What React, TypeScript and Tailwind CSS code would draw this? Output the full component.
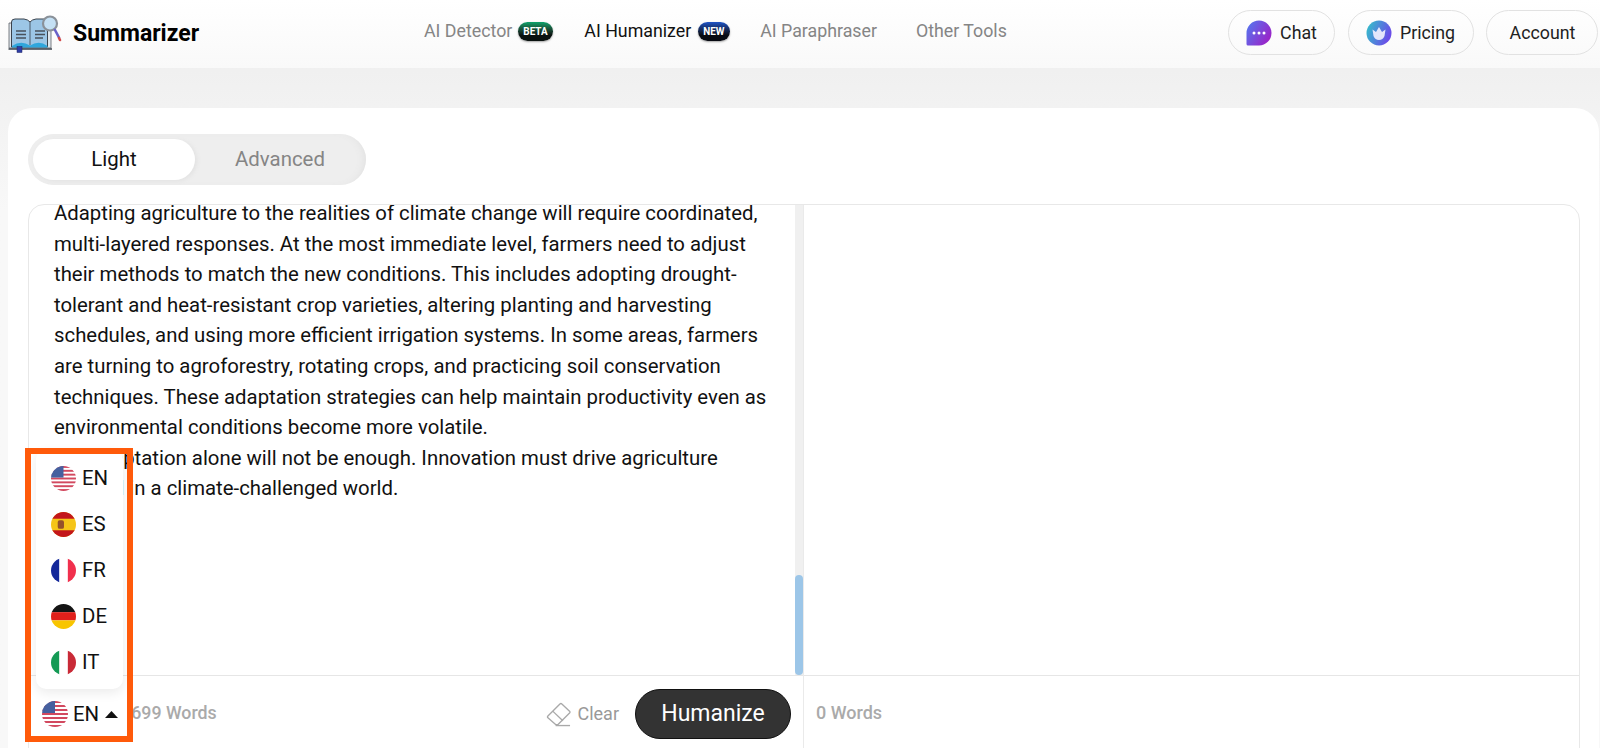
import React from "react";

const Flag = ({ code, size }: { code: string; size: number }) => {
  const id = "c" + code + size;
  return (
    <svg width={size} height={size} viewBox="0 0 26 26" className="shrink-0">
      <clipPath id={id}><circle cx="13" cy="13" r="13" /></clipPath>
      <g clipPath={`url(#${id})`}>
        {code === "EN" && (
          <>
            <rect width="26" height="26" fill="#fff" />
            {[0, 4, 8, 12, 16, 20, 24].map((y) => (
              <rect key={y} y={y} width="26" height="2" fill="#d2495f" />
            ))}
            <rect width="13" height="12" fill="#46609f" />
          </>
        )}
        {code === "ES" && (
          <>
            <rect width="26" height="26" fill="#f5c518" />
            <rect width="26" height="7" fill="#c3161c" />
            <rect y="19" width="26" height="7" fill="#c3161c" />
            <rect x="7" y="8.5" width="6.5" height="9" rx="2" fill="#94512b" />
          </>
        )}
        {code === "FR" && (
          <>
            <rect width="26" height="26" fill="#fff" />
            <rect width="8.5" height="26" fill="#14289a" />
            <rect x="17.5" width="8.5" height="26" fill="#f1304d" />
          </>
        )}
        {code === "DE" && (
          <>
            <rect width="26" height="8.5" fill="#141414" />
            <rect y="8.5" width="26" height="8.5" fill="#e0201b" />
            <rect y="17" width="26" height="9" fill="#f8c500" />
          </>
        )}
        {code === "IT" && (
          <>
            <rect width="26" height="26" fill="#fff" />
            <rect width="8.5" height="26" fill="#149a55" />
            <rect x="17.5" width="8.5" height="26" fill="#c92a37" />
          </>
        )}
      </g>
    </svg>
  );
};

const BookLogo = () => (
  <svg width="54" height="40" viewBox="8 13 54 40" className="shrink-0">
    <path d="M9 22 L9 47 L51 47 L51 22 Z" fill="#dfe6ec" stroke="#5a6068" strokeWidth="0.8" />
    <path d="M11.5 46 L11.5 21 Q11.5 18 15 18 L24 18 Q28 18.5 30 21 Q32 18.5 36 18 L45 18 Q47.5 18 47.5 21 L47.5 46 Z" fill="#9cc6e6" stroke="#3a424c" strokeWidth="1" />
    <path d="M30 21 L30 44" stroke="#3a424c" strokeWidth="0.8" />
    <path d="M12 45 Q21 39 30 44.5 Q39 39 47.5 45 L47.5 46.5 L12 46.5 Z" fill="#2fa6dc" />
    <path d="M8.5 48 L52 48" stroke="#3a424c" strokeWidth="1.6" />
    <rect x="17" y="45.5" width="5" height="6" fill="#2e3da6" stroke="#1c2560" strokeWidth="0.5" />
    <path d="M16 30h10M16 33.5h10M16 37h10M35 30h10M35 33.5h10M35 37h8" stroke="#48525c" strokeWidth="1.5" />
    <circle cx="50" cy="22.5" r="7" fill="#c4e0f4" stroke="#8a9199" strokeWidth="2.2" />
    <path d="M55 29 L59 36.5" stroke="#6a62c8" strokeWidth="2.6" strokeLinecap="round" />
    <path d="M59 37 L60 39" stroke="#d24a4a" strokeWidth="2.6" strokeLinecap="round" />
  </svg>
);

const ChatIcon = () => (
  <svg width="26" height="26" viewBox="0 0 26 26" className="shrink-0">
    <defs>
      <linearGradient id="chatg" x1="0" y1="0" x2="1" y2="0.6">
        <stop offset="0" stopColor="#4f7cf2" />
        <stop offset="1" stopColor="#9a24c8" />
      </linearGradient>
    </defs>
    <path d="M13 0.5a12.5 12.5 0 1 1 0 25H2a1.5 1.5 0 0 1-1.5-1.5V13A12.5 12.5 0 0 1 13 0.5Z" fill="url(#chatg)" />
    <circle cx="8" cy="13" r="1.5" fill="#fff" />
    <circle cx="13" cy="13" r="1.5" fill="#fff" />
    <circle cx="18" cy="13" r="1.5" fill="#fff" />
  </svg>
);

const PricingIcon = () => (
  <svg width="26" height="26" viewBox="0 0 26 26" className="shrink-0">
    <defs>
      <linearGradient id="pricg" x1="0" y1="0" x2="1" y2="0.4">
        <stop offset="0" stopColor="#2fc8c8" />
        <stop offset="1" stopColor="#6a4ee8" />
      </linearGradient>
    </defs>
    <circle cx="13" cy="13" r="12.5" fill="url(#pricg)" />
    <path d="M6.5 9.5 L10 12 L13 7 L16 12 L19.5 9.5 L18.5 16 Q17 20 13 20 Q9 20 7.5 16 Z" fill="#e4e6fb" />
  </svg>
);

const Eraser = () => (
  <svg width="25" height="25" viewBox="0 0 26 26" fill="none" stroke="#a9a9a9" strokeWidth="1.4" strokeLinejoin="round" className="shrink-0">
    <path d="M2 14.5 L14.5 2 a1.5 1.5 0 0 1 2 0 L24.5 9.5 a1.5 1.5 0 0 1 0 2 L12.5 23.5 L10 23.5 L2 16.5 a1.5 1.5 0 0 1 0-2 Z" />
    <path d="M7 9.5 L17.5 19.5" />
    <path d="M10 24.5 H25" />
  </svg>
);

const Badge = ({ label, cls }: { label: string; cls: string }) => (
  <span className={`flex h-[19px] items-center justify-center rounded-full text-[11px] font-bold leading-none text-white shadow-[0_1px_2px_rgba(0,0,0,0.35)] ${cls}`}>
    <span className="scale-x-90">{label}</span>
  </span>
);

const lines = [
  "Adapting agriculture to the realities of climate change will require coordinated,",
  "multi-layered responses. At the most immediate level, farmers need to adjust",
  "their methods to match the new conditions. This includes adopting drought-",
  "tolerant and heat-resistant crop varieties, altering planting and harvesting",
  "schedules, and using more efficient irrigation systems. In some areas, farmers",
  "are turning to agroforestry, rotating crops, and practicing soil conservation",
  "techniques. These adaptation strategies can help maintain productivity even as",
  "environmental conditions become more volatile.",
  "But adaptation alone will not be enough. Innovation must drive agriculture",
  "forward in a climate-challenged world.",
];

export default function App() {
  return (
    <div className="relative flex h-[748px] w-[1600px] flex-col overflow-hidden bg-gradient-to-b from-[#ececec] to-[#f8f8f8] to-[28%] font-['Roboto',sans-serif]">
      <header className="flex h-[68px] shrink-0 items-center bg-gradient-to-b from-white to-[#f9f9f9] pr-[2px]">
        <div className="flex w-[400px] items-center pl-[8px]">
          <BookLogo />
          <span className="ml-[11px] text-[23px] font-bold text-black">Summarizer</span>
        </div>
        <nav className="mb-[5px] ml-[24px] flex flex-1 items-center text-[17.8px] text-[#858585]">
          <span>AI Detector</span>
          <span className="ml-[6px] w-[35px]"><Badge label="BETA" cls="bg-gradient-to-b from-[#0aa46c] to-[#0a1210] to-[70%]" /></span>
          <span className="ml-[31px] text-[#111]">AI Humanizer</span>
          <span className="ml-[7px] w-[32px]"><Badge label="NEW" cls="bg-gradient-to-b from-[#1f55c8] to-[#080a12] to-[70%]" /></span>
          <span className="ml-[30px]">AI Paraphraser</span>
          <span className="ml-[39px]">Other Tools</span>
        </nav>
        <div className="mb-[3px] flex items-center gap-[12.5px] text-[17.8px] text-[#222]">
          <button className="flex h-[45px] w-[107px] items-center justify-center gap-[8px] rounded-full border border-[#e2e2e2]"><ChatIcon /><span className="pt-[2px]">Chat</span></button>
          <button className="flex h-[45px] w-[126px] items-center justify-center gap-[8px] rounded-full border border-[#e2e2e2]"><PricingIcon /><span className="pt-[2px]">Pricing</span></button>
          <button className="flex h-[45px] w-[112px] items-center justify-center rounded-full border border-[#e2e2e2]"><span className="pl-[1px] pt-[2px]">Account</span></button>
        </div>
      </header>

      <main className="ml-[8px] mr-[1px] mt-[40px] flex-1 rounded-t-[24px] bg-white pl-[20px] pr-[19px] pt-[26px]">
        <div className="flex h-[51px] w-[338px] items-center rounded-full bg-[#eeeeee] p-[5px] shadow-[inset_-6px_0_10px_-6px_#ddd]">
          <div className="flex h-full w-[162px] items-center justify-center rounded-full bg-white text-[20.4px] text-[#111] shadow-[2px_1px_4px_#e2e2e2]">Light</div>
          <div className="flex flex-1 items-center justify-center pl-[4px] text-[20.4px] text-[#858585]">Advanced</div>
        </div>

        <div className="mt-[19px] flex h-[600px] rounded-[16px] border border-[#e8e8e8]">
          <div className="relative flex w-[775px] shrink-0 flex-col border-r border-[#eaeaea]">
            <div className="relative h-[470px] overflow-hidden rounded-tl-[16px]">
              <div className="-mt-[7px] whitespace-nowrap pl-[25px] text-[20.35px] leading-[30.6px] text-[#111]">
                {lines.map((l) => <div key={l}>{l}</div>)}
              </div>
              <div className="absolute bottom-0 right-0 top-0 w-[8px] bg-[#f0f0f0]">
                <div className="absolute bottom-0 h-[100px] w-full rounded-full bg-[#9cc6e8]" />
              </div>
            </div>
            <div className="flex flex-1 items-start border-t border-[#e6e6e6] pl-[13px] pr-[12px] pt-[13px]">
              <div className="flex h-[50px] w-full items-center">
                <div className="relative z-10 -mr-[10px] flex h-full items-center bg-white pr-[10px] text-[20.4px] text-[#111]">
                  <Flag code="EN" size={26} />
                  <span className="ml-[5px]">EN</span>
                  <svg width="13" height="7" viewBox="0 0 13 7" className="ml-[6px]"><path d="M6.5 0 L13 7 H0 Z" fill="#111" /></svg>
                </div>
                <span className="mb-[2px] ml-[3px] text-[17.8px] font-medium text-[#aaaaaa]">1699 Words</span>
                <div className="ml-auto flex items-center">
                  <Eraser />
                  <span className="mb-[2px] ml-[6px] text-[18px] text-[#999]">Clear</span>
                  <button className="ml-[16px] flex h-[50px] w-[156px] items-center justify-center rounded-full border border-[#111] bg-[#333333] text-[23px] text-white">Humanize</button>
                </div>
              </div>
            </div>
            <div className="absolute left-[7px] top-[244px] z-10 w-[87px] rounded-[10px] bg-white pb-[4px] pt-[6px] shadow-[0_4px_12px_rgba(0,0,0,0.08)]">
              {["EN", "ES", "FR", "DE", "IT"].map((c) => (
                <div key={c} className="flex h-[46px] items-center pl-[15px] text-[20.4px] text-[#111]">
                  <Flag code={c} size={25} />
                  <span className="ml-[6px]">{c}</span>
                </div>
              ))}
            </div>
          </div>
          <div className="flex flex-1 flex-col">
            <div className="h-[470px]" />
            <div className="flex flex-1 items-start border-t border-[#e6e6e6] pt-[13px]">
              <div className="flex h-[46px] items-center pl-[12px] text-[18px] font-medium text-[#aaaaaa]">0 Words</div>
            </div>
          </div>
        </div>
      </main>

      <div className="pointer-events-none absolute left-[24.5px] top-[448px] z-20 h-[294px] w-[108.5px] border-[6px] border-[#ff5a0a]" />
    </div>
  );
}
